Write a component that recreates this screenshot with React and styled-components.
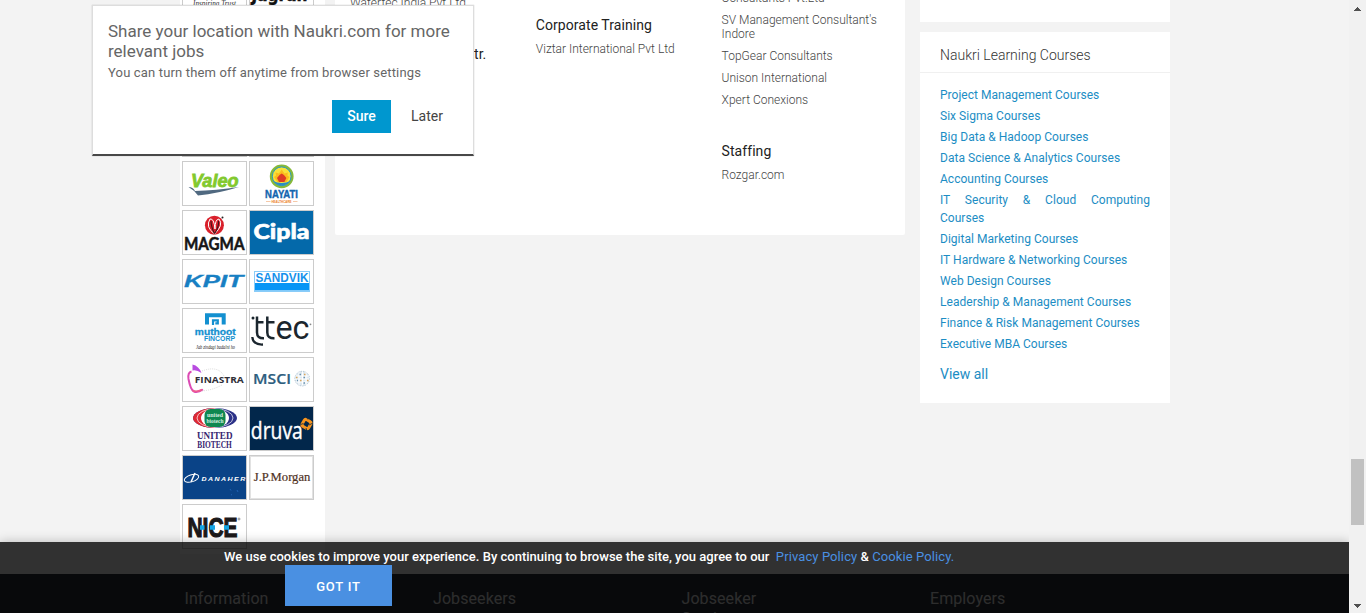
import React from "react";
import styled, { createGlobalStyle } from "styled-components";

const Global = createGlobalStyle`
  *, *::before, *::after { box-sizing: border-box; }
  html, body { margin: 0; padding: 0; overflow: hidden; background: #f3f3f3; }
  body { font-family: Roboto, "Liberation Sans", sans-serif; }
  h2, h3, h4, p, ul { margin: 0; padding: 0; font-weight: 400; }
  ul { list-style: none; }
  a { color: inherit; text-decoration: none; }
`;

const Window = styled.div`
  display: flex;
  width: 1366px;
  height: 613px;
  overflow: hidden;
  position: relative;
`;
const Page = styled.div`
  width: 1349px;
  height: 613px;
  overflow: hidden;
  background: #f3f3f3;
`;
const Content = styled.main`
  display: flex;
  align-items: flex-start;
  height: 574px;
  padding-left: 180px;
  overflow: hidden;
`;
const LogoColumn = styled.aside`
  width: 145px;
  height: 554px;
  padding-left: 2px;
  background: #fff;
  overflow: hidden;
  flex: none;
`;
const LogoGrid = styled.div`
  display: grid;
  grid-template-columns: 65px 65px;
  grid-auto-rows: 45px;
  gap: 4px 2px;
  margin-top: -35px;
`;
const LogoCell = styled.a`
  display: block;
  border: 1px solid #ccc;
  background: ${(p) => p.$bg || "#fff"};
  svg { display: block; }
`;

const Directory = styled.section`
  display: flex;
  width: 570px;
  height: 235px;
  margin-left: 10px;
  padding-left: 15px;
  background: #fff;
  border-radius: 0 0 2px 2px;
  overflow: hidden;
  flex: none;
`;
const DirColumn = styled.div`
  flex: none;
  width: 185.8px;
  padding-right: 20px;
  margin-top: ${(p) => p.$shift}px;
`;
const DirHeading = styled.h3`
  font-size: 14px;
  line-height: 18px;
  letter-spacing: 0.06px;
  color: #222;
  margin-top: ${(p) => p.$top || 0}px;
  margin-bottom: 8px;
  padding-left: ${(p) => p.$indent || 0}px;
`;
const DirItem = styled.p`
  font-size: 12px;
  line-height: 14px;
  font-weight: 300;
  color: #444;
  margin-bottom: 8px;
`;

const Side = styled.aside`
  display: flex;
  flex-direction: column;
  gap: 10px;
  width: 250px;
  margin-left: 15px;
  flex: none;
`;
const CardEnd = styled.div`
  height: 22px;
  background: #fff;
`;
const Card = styled.section`
  height: 371px;
  background: #fff;
`;
const CardTitle = styled.h2`
  height: 41px;
  padding: 5px 20px 0;
  border-bottom: 1px solid #f0f0f0;
  font-size: 14px;
  line-height: 36px;
  font-weight: 300;
  color: #333;
`;
const CourseList = styled.ul`
  padding: 13px 20px 0;
  color: #1c8dc4;
  font-size: 12px;
  line-height: 18px;
  text-align: justify;
`;
const Course = styled.li`
  margin-bottom: 3px;
  letter-spacing: 0.03px;
`;
const ViewAll = styled.a`
  display: block;
  padding: 9px 20px 0;
  font-size: 14px;
  line-height: 18px;
  color: #1c8dc4;
`;

const Footer = styled.footer`
  display: flex;
  height: 39px;
  padding: 15px 0 0 184.5px;
  background: #282d37;
  overflow: hidden;
`;
const FooterTitle = styled.h4`
  width: 248.5px;
  padding-right: 130px;
  font-size: 16px;
  line-height: 20px;
  letter-spacing: 0.08px;
  color: #e0e0e0;
`;

const CookieBar = styled.div`
  position: absolute;
  left: 0;
  top: 542px;
  width: 1349px;
  height: 71px;
  padding: 6px 0 0 224px;
  background: rgba(0, 0, 0, 0.8);
  box-shadow: 0 0 10px rgba(0, 0, 0, 0.25);
  color: #fff;
  clip-path: inset(-12px 0 0 0);
`;
const CookieText = styled.p`
  font-size: 13px;
  line-height: 17px;
  font-weight: 500;
  letter-spacing: 0.01px;
  white-space: pre;
`;
const CookieLink = styled.a`
  font-weight: 400;
  letter-spacing: 0.1px;
  color: #4a90e2;
`;
const GotIt = styled.button`
  display: block;
  width: 107px;
  height: 41px;
  margin-left: 61px;
  padding: 2px 0 0;
  border: 0;
  background: #4a90e2;
  color: #fff;
  font: 500 13px/20px Roboto, sans-serif;
  letter-spacing: 0.8px;
`;

const Dialog = styled.div`
  position: absolute;
  left: 92px;
  top: 5px;
  width: 382px;
  height: 151px;
  padding: 15px 15px 0;
  background: #fff;
  border: 1px solid #ddd;
  border-bottom: 2px solid #484848;
  box-shadow: 0 0 1px rgba(0, 0, 0, 0.25);
`;
const DialogTitle = styled.h2`
  font-size: 17px;
  line-height: 20px;
  color: #666;
  white-space: nowrap;
`;
const DialogNote = styled.p`
  margin-top: 1px;
  font-size: 13px;
  line-height: 22px;
  letter-spacing: 0.16px;
  color: #666;
  white-space: nowrap;
`;
const DialogActions = styled.div`
  display: flex;
  justify-content: flex-end;
  margin-top: 16px;
`;
const Action = styled.button`
  width: ${(p) => p.$w}px;
  height: 33px;
  padding: 0 0 0 ${(p) => (p.$primary ? 0 : 5)}px;
  border: 0;
  background: ${(p) => (p.$primary ? "#0097cf" : "#fff")};
  color: ${(p) => (p.$primary ? "#fff" : "#444")};
  font: ${(p) => (p.$primary ? 500 : 400)} 14px/33px Roboto, sans-serif;
`;

const Scrollbar = styled.div`
  display: flex;
  flex-direction: column;
  width: 17px;
  height: 613px;
  align-items: center;
  background: #f1f1f1;
  padding: 7px 0 5px;
`;
const Thumb = styled.div`
  width: 13px;
  height: 66px;
  margin: 448px 0 auto;
  background: #c1c1c1;
`;

/* Company marks, drawn on a 65 x 45 cell */
const T = ({ x, y, w, s, f = "Liberation Sans", weight = 700, fill, italic, bold = 0, children }) => (
  <text x={x} y={y} textLength={w} lengthAdjust="spacingAndGlyphs" fontSize={s}
    fontFamily={`"${f}", sans-serif`} fontWeight={weight} fill={fill}
    stroke={bold ? fill : "none"} strokeWidth={bold}
    fontStyle={italic ? "italic" : "normal"}>{children}</text>
);

const logos = [
  { id: "trust", art: <T x="11" y="40.5" w="43" s="8" f="Liberation Serif" weight={400} italic fill="#333">Inspiring Trust</T> },
  { id: "jagran", art: <T x="2.5" y="36.3" w="56" s="19" f="DejaVu Sans" fill="#111" bold={0.5}>Jagran</T> },
  { id: "b1" }, { id: "b2" }, { id: "b3" }, { id: "b4" }, { id: "b5" }, { id: "b6" },
  { id: "valeo", art: <>
    <T x="9" y="26" w="47.5" s="18" italic fill="#82c92e" bold={0.8}>Valeo</T>
    <path d="M6.500 26 Q11 26 13 30 Q34 29.500 57 26 Q36 32.500 16 34.500 Q12 29 6.500 26Z" fill="#506980" />
  </> },
  { id: "nayati", art: <>
    <circle cx="32.7" cy="15.3" r="10.6" fill="#f8e23a" stroke="#86b93b" strokeWidth="2.6" />
    <circle cx="32.7" cy="15.3" r="9.4" fill="none" stroke="#2b9ac4" strokeWidth="1" />
    <path d="M25 16 l2 -1.500 -.5 -3 3.500 1 2.7 -4 2.7 4 3.500 -1 -.5 3 2 1.500 -3 5 h-9z" fill="#fbbc1e" />
    <path d="M28 17 l2.500 -3 2.2 -1.500 2.2 1.500 2.500 3 -2 4 h-5.4z" fill="#de3c25" />
    <path d="M24 20 Q32.7 29 41.5 20 Q32.7 24 24 20Z" fill="#2b8dc4" />
    <T x="16" y="37.3" w="33" s="11.500" fill="#1264ae" bold={0.4}>NAYATI</T>
    <T x="22.5" y="41.5" w="20" s="3" fill="#ed7d25">HEALTHCARE</T>
    <path d="M17 40.5h4.500M44 40.500h4.500" stroke="#f2b183" strokeWidth="0.7" />
  </> },
  { id: "magma", art: <>
    <circle cx="32.4" cy="15.2" r="9.5" fill="#d9202b" />
    <path d="M32.500 24 Q23 17 28 9 Q32 8 33 19 Q33 9 37 9 Q42 15 32.500 24" fill="none" stroke="#fff" strokeWidth="1" />
    <path d="M32.500 24 Q29 16 29 11 M33 23 Q37 17 36.500 11" fill="none" stroke="#40131a" strokeWidth="1.1" />
    <circle cx="40.500" cy="7.600" r="1" fill="#222" />
    <T x="2" y="39.500" w="60.500" s="16.500" f="Lato" weight={700} fill="#161616" bold={0.5}>MAGMA</T>
  </> },
  { id: "cipla", bg: "#0469aa", art: <T x="4.500" y="28.800" w="56" s="20.500" f="Lato" weight={900} fill="#fff" bold={0.6}>Cipla</T> },
  { id: "kpit", art: <T x="2" y="28.200" w="59" s="16.500" italic fill="#187fc3" bold={0.3}>KPIT</T> },
  { id: "sandvik", art: <>
    <rect x="5.500" y="12.500" width="55" height="20" fill="#fff" stroke="#8accf8" />
    <T x="6.500" y="22.600" w="53" s="12" fill="#1592ec">SANDVIK</T>
    <rect x="6" y="24" width="54" height="7.500" fill="#0795f5" />
  </> },
  { id: "muthoot", art: <>
    <path d="M23 5.300h20.700v11.200h-4v-7.200h-12.700v7.200h-4z" fill="#1390d0" />
    <path d="M31 17v-4.700h4.800v3h-2.500" fill="none" stroke="#1390d0" strokeWidth="2.200" />
    <T x="12.800" y="26.700" w="41" s="9.700" fill="#1390d0" bold={0.3}>muthoot</T>
    <T x="22" y="33" w="31" s="6.300" fill="#1390d0">FINCORP</T>
    <T x="14" y="40.500" w="39" s="5.500" f="Liberation Serif" weight={400} italic fill="#222">Jab zindagi badalni ho</T>
  </> },
  { id: "ttec", art: <>
    <path d="M8 8.500V24.500Q8 30.500 15 30.200M18.300 8.500V24.500Q18.300 30.500 25.500 30.200M8 14.300H14.500M18.300 14.300H25.500" fill="none" stroke="#1b262e" strokeWidth="2.500" />
    <T x="26.500" y="30.600" w="34" s="34" f="Roboto" weight={400} fill="#1b262e">ec</T>
    <path d="M3.300 29 Q4 37 14 36.500" fill="none" stroke="#1b262e" strokeWidth="2.300" />
    <circle cx="4" cy="10" r="1.500" fill="#1b262e" />
    <circle cx="61.500" cy="16.300" r="0.900" fill="#888" />
  </> },
  { id: "finastra", art: <>
    <path d="M10.500 7.500 Q17 9 19.500 16 Q14.500 12.500 10.500 13.500Z" fill="#b84be0" />
    <path d="M9.500 14.500 Q5.500 15.500 6.500 22 Q8.500 33 12 34.500 Q15.500 36 21 32.500" fill="none" stroke="#dc4bb4" strokeWidth="2" />
    <path d="M10.500 33.500 Q14.500 35.500 20 32.500" fill="none" stroke="#ef5c8d" strokeWidth="1.600" />
    <path d="M20 14 Q36 8 42 19 M20 34 Q31 33 40 28" fill="none" stroke="#ccc" strokeWidth="0.700" strokeDasharray="1 1" />
    <T x="12.800" y="26.200" w="49" s="9.300" f="Open Sans" fill="#303038">FINASTRA</T>
  </> },
  { id: "msci", art: <>
    <T x="4" y="27.200" w="38" s="14.500" f="Open Sans" weight={600} fill="#2d5e7e" bold={0.2}>MSCI</T>
    <circle cx="53.200" cy="21.600" r="7.300" fill="#dde8f0" stroke="#9fb8c8" strokeWidth="0.800" strokeDasharray="1.500 1" />
    <path d="M46.500 19h13.500M46 22h14.500M47 25h12.500M50 15v13M53.500 14.500v14M57 15v13" stroke="#fff" strokeWidth="1" />
    <path d="M47 20.500h1.500M51 23.500h1.500M55 17.500h1.500M58 23.500h1.500" stroke="#dba65a" strokeWidth="1.300" />
    <path d="M50.500 17.500h1.500M54.500 20.500h1.500M54.500 26h1.500M48 23.500h1" stroke="#6891ad" strokeWidth="1.300" />
  </> },
  { id: "united", art: <>
    <ellipse cx="33" cy="12" rx="22" ry="10" fill="#2b3187" />
    <path d="M33 2 A22 10 0 0 0 33 22Z" fill="#de2a35" />
    <ellipse cx="33" cy="12" rx="18" ry="9.300" fill="none" stroke="#fff" strokeWidth="0.700" />
    <ellipse cx="33" cy="12" rx="14" ry="9.300" fill="#fff" />
    <rect x="22.500" y="3" width="21" height="18" rx="6" fill="#0f8750" />
    <T x="25" y="11" w="16" s="6" f="Liberation Serif" fill="#d6eee0">united</T>
    <T x="24.500" y="17" w="17" s="6" f="Liberation Serif" fill="#d6eee0">biotech</T>
    <T x="15" y="32.600" w="35.500" s="9.300" f="Liberation Serif" fill="#36246f">UNITED</T>
    <T x="15.300" y="42.300" w="34.500" s="10" f="Liberation Serif" fill="#36246f">BIOTECH</T>
  </> },
  { id: "druva", bg: "#02274b", art: <>
    <T x="1.800" y="32.500" w="52" s="23" f="Open Sans" weight={400} fill="#fff" bold={0.4}>druva</T>
    <rect x="53.700" y="14.200" width="7.600" height="7.600" rx="2" transform="rotate(30 57.500 18)" fill="none" stroke="#f7941e" strokeWidth="3" />
    <path d="M57 10.500l2 3M64 17l-4 2M51.500 18.500l3 -1M58 25l-1 -3" stroke="#02274b" strokeWidth="0.800" />
  </> },
  { id: "danaher", bg: "#0a4387", art: <>
    <ellipse cx="9.500" cy="23.300" rx="7.500" ry="3.500" transform="rotate(-18 9.500 23.300)" fill="none" stroke="#fff" strokeWidth="1" />
    <path d="M13 18l-4 9" stroke="#fff" strokeWidth="1.500" />
    <g transform="translate(19.500 25.600) scale(1.250 1)">
      <text textLength="35" fontSize="5.600" fontFamily="Liberation Sans, sans-serif" fontWeight="700" fontStyle="italic" fill="#fff">DANAHER</text>
    </g>
    <path d="M48 34l1 1.500M55 35l1 2M49 39.500l1 .5" stroke="#236ac0" strokeWidth="0.800" />
  </> },
  { id: "jpm", art: <>
    <rect x="1.500" y="1.500" width="62" height="42" fill="none" stroke="#e2e2e2" />
    <T x="4.800" y="25.600" w="56.500" s="12.500" f="Liberation Serif" weight={400} fill="#50321f" bold={0.2}>J.P.Morgan</T>
  </> },
  { id: "nice", art: <>
    <T x="5.500" y="33.300" w="50" s="28" fill="#1c191a" bold={1.2}>NICE</T>
    <path d="M18 21.300h4.500v4.500h-4.500zM28 21.300h5v4.500h-5zM42 21.300h5v4.500h-5z" fill="#15a5e5" />
    <circle cx="57" cy="15" r="1" fill="none" stroke="#555" strokeWidth="0.600" />
  </> },
];

const courses = [
  "Project Management Courses", "Six Sigma Courses", "Big Data & Hadoop Courses",
  "Data Science & Analytics Courses", "Accounting Courses",
  "IT Security & Cloud Computing Courses", "Digital Marketing Courses",
  "IT Hardware & Networking Courses", "Web Design Courses",
  "Leadership & Management Courses", "Finance & Risk Management Courses",
  "Executive MBA Courses",
];

export default function App() {
  return (
    <Window>
      <Global />
      <Page>
        <Content>
          <LogoColumn>
            <LogoGrid>
              {logos.map((l) => (
                <LogoCell key={l.id} $bg={l.bg}>
                  {l.art && <svg width="63" height="43" viewBox="1 1 63 43">{l.art}</svg>}
                </LogoCell>
              ))}
            </LogoGrid>
          </LogoColumn>
          <Directory>
            <DirColumn $shift={-4}>
              <DirItem>Watertec India Pvt Ltd</DirItem>
              <DirHeading $top={35} $indent={124}>tr.</DirHeading>
            </DirColumn>
            <DirColumn $shift={16}>
              <DirHeading>Corporate Training</DirHeading>
              <DirItem>Viztar International Pvt Ltd</DirItem>
            </DirColumn>
            <DirColumn $shift={-9}>
              <DirItem>Consultants Pvt.Ltd</DirItem>
              <DirItem>SV Management Consultant's Indore</DirItem>
              <DirItem>TopGear Consultants</DirItem>
              <DirItem>Unison International</DirItem>
              <DirItem>Xpert Conexions</DirItem>
              <DirHeading $top={35}>Staffing</DirHeading>
              <DirItem>Rozgar.com</DirItem>
            </DirColumn>
          </Directory>
          <Side>
            <CardEnd />
            <Card>
              <CardTitle>Naukri Learning Courses</CardTitle>
              <CourseList>
                {courses.map((c) => <Course key={c}><a>{c}</a></Course>)}
              </CourseList>
              <ViewAll>View all</ViewAll>
            </Card>
          </Side>
        </Content>
        <Footer>
          <FooterTitle>Information</FooterTitle>
          <FooterTitle>Jobseekers</FooterTitle>
          <FooterTitle>Jobseeker Services</FooterTitle>
          <FooterTitle>Employers</FooterTitle>
        </Footer>
      </Page>
      <Scrollbar>
        <svg width="7" height="4" viewBox="0 0 7 4"><path d="M3 0h1v1h1v1h1v1h1v1h-7v-1h1v-1h1v-1h1z" fill="#505050" /></svg>
        <Thumb />
        <svg width="7" height="4" viewBox="0 0 7 4"><path d="M0 0h7v1h-1v1h-1v1h-1v1h-1v-1h-1v-1h-1v-1h-1z" fill="#505050" /></svg>
      </Scrollbar>
      <CookieBar>
        <CookieText>
          We use cookies to improve your experience. By continuing to browse the site, you agree to our{"  "}
          <CookieLink>Privacy Policy</CookieLink>{" & "}<CookieLink>Cookie Policy.</CookieLink>
        </CookieText>
        <GotIt>GOT IT</GotIt>
      </CookieBar>
      <Dialog>
        <DialogTitle>Share your location with Naukri.com for more<br />relevant jobs</DialogTitle>
        <DialogNote>You can turn them off anytime from browser settings</DialogNote>
        <DialogActions>
          <Action $primary $w={59}>Sure</Action>
          <Action $w={67}>Later</Action>
        </DialogActions>
      </Dialog>
    </Window>
  );
}
